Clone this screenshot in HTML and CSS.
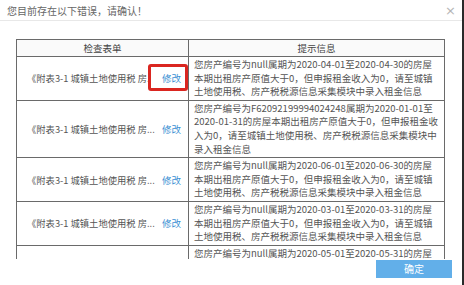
FILE: index.html
```html
<!DOCTYPE html>
<html lang="zh-CN">
<head>
    <meta charset="UTF-8">
    <title>错误确认</title>
    <link rel="stylesheet" href="styles.css">
</head>
<body>
    <div class="dialog">
        <div class="dialog-head">
            <span class="dialog-title">您目前存在以下错误，请确认！</span>
            <span class="close">×</span>
        </div>
        <div class="list">
            <table class="check-table">
                <thead>
                    <tr>
                        <th class="col-form">检查表单</th>
                        <th class="col-info">提示信息</th>
                    </tr>
                </thead>
                <tbody>
                    <tr>
                        <td class="col-form">
                            <div class="form-cell">
                                <span class="form-name">《附表3-1 城镇土地使用税 房.</span>
                                <a class="edit marked" href="#">修改</a>
                            </div>
                        </td>
                        <td class="col-info">您房产编号为null属期为2020-04-01至2020-04-30的房屋<br>本期出租房产原值大于0，但申报租金收入为0，请至城镇<br>土地使用税、房产税税源信息采集模块中录入租金信息</td>
                    </tr>
                    <tr>
                        <td class="col-form">
                            <div class="form-cell">
                                <span class="form-name">《附表3-1 城镇土地使用税 房...</span>
                                <a class="edit" href="#">修改</a>
                            </div>
                        </td>
                        <td class="col-info">您房产编号为F62092199994024248属期为2020-01-01至<br>2020-01-31的房屋本期出租房产原值大于0，但申报租金收<br>入为0，请至城镇土地使用税、房产税税源信息采集模块中<br>录入租金信息</td>
                    </tr>
                    <tr>
                        <td class="col-form">
                            <div class="form-cell">
                                <span class="form-name">《附表3-1 城镇土地使用税 房...</span>
                                <a class="edit" href="#">修改</a>
                            </div>
                        </td>
                        <td class="col-info">您房产编号为null属期为2020-06-01至2020-06-30的房屋<br>本期出租房产原值大于0，但申报租金收入为0，请至城镇<br>土地使用税、房产税税源信息采集模块中录入租金信息</td>
                    </tr>
                    <tr>
                        <td class="col-form">
                            <div class="form-cell">
                                <span class="form-name">《附表3-1 城镇土地使用税 房...</span>
                                <a class="edit" href="#">修改</a>
                            </div>
                        </td>
                        <td class="col-info">您房产编号为null属期为2020-03-01至2020-03-31的房屋<br>本期出租房产原值大于0，但申报租金收入为0，请至城镇<br>土地使用税、房产税税源信息采集模块中录入租金信息</td>
                    </tr>
                    <tr>
                        <td class="col-form">
                            <div class="form-cell">
                                <span class="form-name">《附表3-1 城镇土地使用税 房...</span>
                                <a class="edit" href="#">修改</a>
                            </div>
                        </td>
                        <td class="col-info">您房产编号为null属期为2020-05-01至2020-05-31的房屋<br>本期出租房产原值大于0，但申报租金收入为0，请至城镇<br>土地使用税、房产税税源信息采集模块中录入租金信息</td>
                    </tr>
                </tbody>
            </table>
        </div>
        <div class="dialog-foot">
            <button class="btn-ok">确定</button>
        </div>
    </div>
</body>
</html>
```

FILE: styles.css
```css
body {
    margin: 0;
    padding: 0;
    background: #fff;
    font-family: "Noto Sans CJK SC", "Microsoft YaHei", sans-serif;
    font-size: 10px;
    color: #555;
}

.dialog {
    width: 462px;
    height: 285px;
    border-right: 2px solid #2a2a2a;
    background: #fff;
}

.dialog-head {
    display: flex;
    justify-content: space-between;
    align-items: center;
    height: 20px;
    padding: 0 6px 0 7px;
    border-bottom: 1px solid #e8e8e8;
}

.dialog-title {
    color: #666;
    font-size: 10px;
}

.close {
    color: #b5b5b5;
    font-size: 13px;
    font-family: "DejaVu Sans", sans-serif;
    line-height: 1;
}

.list {
    height: 220px;
    margin-top: 18px;
    overflow: hidden;
}

.check-table {
    margin-left: 16px;
    width: 429px;
    border-collapse: collapse;
    table-layout: fixed;
}

.check-table th,
.check-table td {
    border: 1px solid #6a6a6a;
    padding: 0;
    font-size: 9.5px;
}

.check-table th {
    height: 16px;
    line-height: 16px;
    font-weight: normal;
    color: #444;
    background: #fafafa;
    text-align: center;
}

.check-table .col-form {
    width: 171px;
}

.check-table td.col-info {
    padding: 1px 2px 1px 5px;
    line-height: 13.6px;
    white-space: nowrap;
    overflow: hidden;
    color: #555;
}

.form-cell {
    display: flex;
    justify-content: space-between;
    align-items: center;
    padding: 0 7px 0 10px;
    white-space: nowrap;
}

.form-name {
    font-size: 9.3px;
}

.edit {
    position: relative;
    color: #3b8fd3;
    text-decoration: none;
    line-height: 14px;
}

.edit.marked::after {
    content: "";
    position: absolute;
    left: -14px;
    top: -7px;
    width: 40px;
    height: 27px;
    border: 3px solid #da2620;
    border-radius: 3px;
    box-sizing: border-box;
}

.dialog-foot {
    display: flex;
    justify-content: flex-end;
    padding: 1px 10px 0 0;
}

.btn-ok {
    width: 76px;
    height: 18px;
    border: none;
    background: #62afe9;
    color: #fff;
    font-family: inherit;
    font-size: 10px;
    line-height: 18px;
    padding: 0;
}
```
